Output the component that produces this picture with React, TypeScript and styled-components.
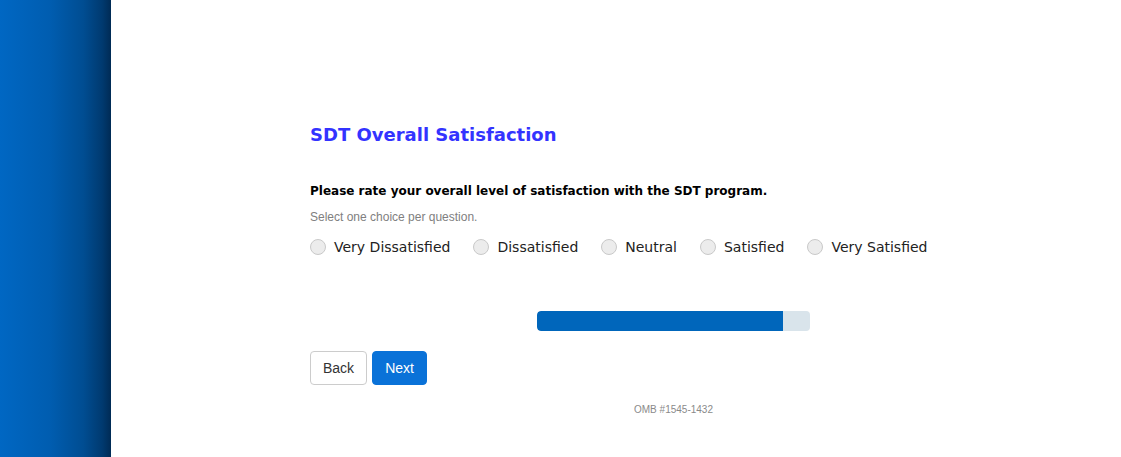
import styled, { createGlobalStyle } from "styled-components";

const GlobalStyle = createGlobalStyle`
  html, body {
    margin: 0;
    padding: 0;
    background: #ffffff;
  }
`;

const Page = styled.div`
  display: flex;
  width: 1121px;
  height: 457px;
  overflow: hidden;
`;

const Sidebar = styled.div`
  width: 111px;
  flex-shrink: 0;
  background: linear-gradient(
    to right,
    #0067c3 0%,
    #005db0 45%,
    #004d92 75%,
    #003a70 92%,
    #002b55 100%
  );
`;

const Main = styled.div`
  flex: 1;
  padding: 124px 0 0 199px;
`;

const Column = styled.div`
  width: 727px;
  display: flex;
  flex-direction: column;
`;

const Title = styled.h1`
  margin: 0;
  font-family: "DejaVu Sans", Verdana, sans-serif;
  font-size: 18px;
  font-weight: bold;
  color: #3333ff;
  line-height: 22px;
`;

const Question = styled.div`
  margin-top: 37px;
  font-family: "DejaVu Sans", Verdana, sans-serif;
  font-size: 12px;
  font-weight: bold;
  color: #000000;
  line-height: 16px;
`;

const Hint = styled.div`
  margin-top: 11px;
  font-family: "Liberation Sans", Arial, sans-serif;
  font-size: 12px;
  color: #808080;
  line-height: 14px;
`;

const Choices = styled.div`
  margin-top: 14px;
  display: flex;
  align-items: center;
  gap: 23px;
`;

const Choice = styled.label`
  display: flex;
  align-items: center;
  gap: 8px;
  font-family: "DejaVu Sans", Verdana, sans-serif;
  font-size: 14px;
  color: #222222;
  line-height: 18px;
  cursor: pointer;
`;

const Dot = styled.span`
  width: 14px;
  height: 14px;
  border-radius: 50%;
  background: #ececec;
  border: 1px solid #c9c9c9;
`;

const ProgressRow = styled.div`
  margin-top: 55px;
  display: flex;
  justify-content: center;
`;

const Track = styled.div`
  width: 273px;
  height: 20px;
  border-radius: 4px;
  background: #d9e4eb;
  overflow: hidden;
`;

const Fill = styled.div`
  height: 100%;
  background: #0066bb;
  border-radius: 4px 0 0 4px;
`;

const Buttons = styled.div`
  margin-top: 20px;
  display: flex;
  gap: 5px;
`;

const Button = styled.button<{ $primary?: boolean }>`
  height: 34px;
  padding: 0 12px;
  border-radius: 4px;
  font-family: "Liberation Sans", Arial, sans-serif;
  font-size: 14px;
  cursor: pointer;
  border: 1px solid ${(p) => (p.$primary ? "#0a72d8" : "#cccccc")};
  background: ${(p) => (p.$primary ? "#0a72d8" : "#ffffff")};
  color: ${(p) => (p.$primary ? "#ffffff" : "#333333")};
`;

const Omb = styled.div`
  margin-top: 19px;
  text-align: center;
  font-family: "Liberation Sans", Arial, sans-serif;
  font-size: 10px;
  line-height: 12px;
  color: #8a8a8a;
`;

const options = [
  "Very Dissatisfied",
  "Dissatisfied",
  "Neutral",
  "Satisfied",
  "Very Satisfied",
];

export default function App() {
  const progress = 90;
  return (
    <>
      <GlobalStyle />
      <Page>
        <Sidebar />
        <Main>
          <Column>
            <Title>SDT Overall Satisfaction</Title>
            <Question>
              Please rate your overall level of satisfaction with the SDT program.
            </Question>
            <Hint>Select one choice per question.</Hint>
            <Choices>
              {options.map((o) => (
                <Choice key={o}>
                  <Dot />
                  {o}
                </Choice>
              ))}
            </Choices>
            <ProgressRow>
              <Track>
                <Fill style={{ width: `${progress}%` }} />
              </Track>
            </ProgressRow>
            <Buttons>
              <Button>Back</Button>
              <Button $primary>Next</Button>
            </Buttons>
            <Omb>OMB #1545-1432</Omb>
          </Column>
        </Main>
      </Page>
    </>
  );
}
